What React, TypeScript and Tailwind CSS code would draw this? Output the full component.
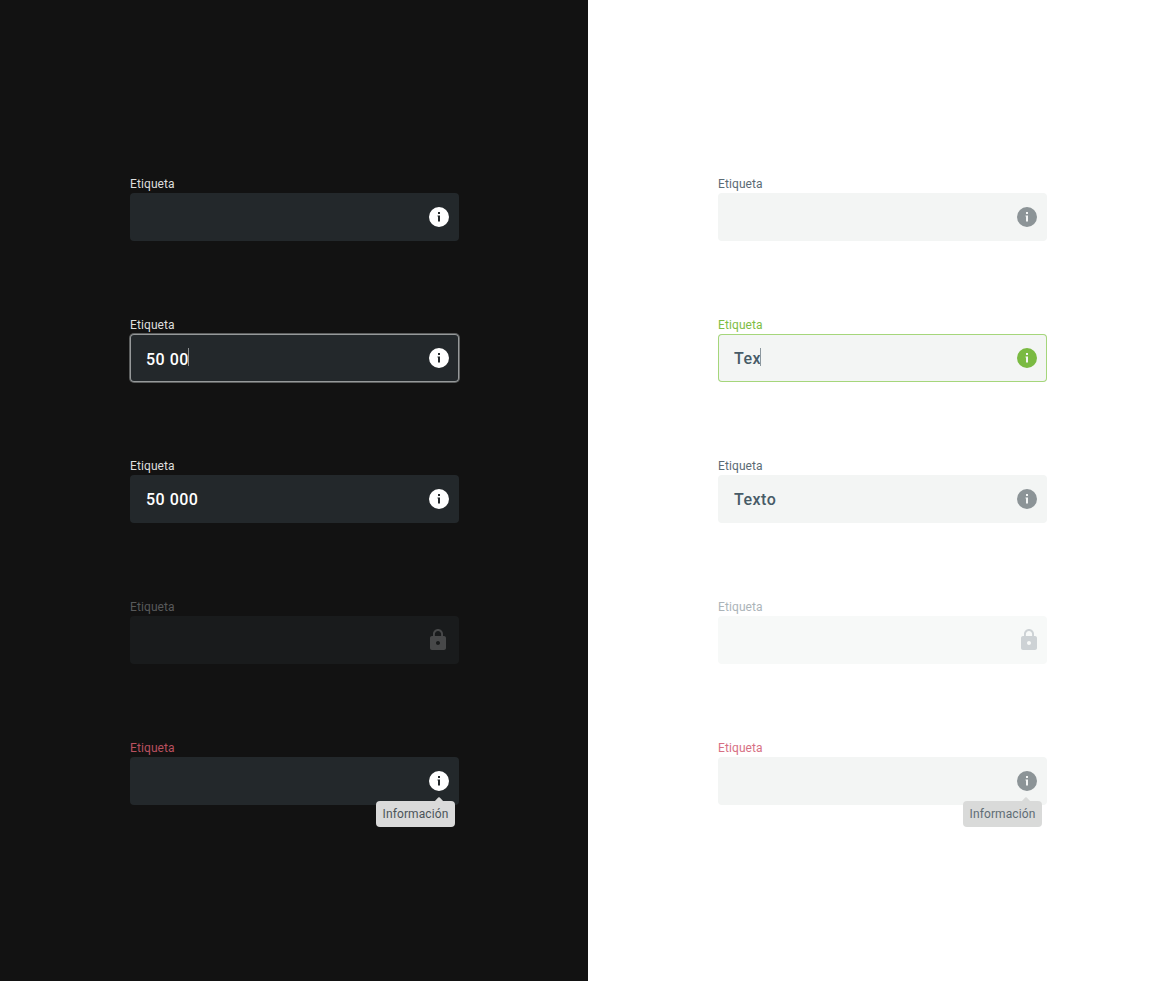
import React from "react";

type Field = {
  label: string;
  labelClass: string;
  boxClass: string;
  value?: string;
  valueClass?: string;
  caretClass?: string;
  icon: "info" | "lock";
  iconClass: string;
  tooltip?: string;
  tooltipClass?: string;
  arrowClass?: string;
};

function InfoIcon() {
  return (
    <svg viewBox="0 0 24 24" className="block size-6" fill="currentColor">
      <path
        fillRule="evenodd"
        d="M12 2a10 10 0 1 0 0 20 10 10 0 0 0 0-20Zm1 14.600h-2v-5.200h-.5v-.8H13v6Zm0-7.600h-2V7h2v2Z"
      />
    </svg>
  );
}

function LockIcon() {
  return (
    <svg viewBox="0 0 24 24" className="block size-6" fill="currentColor">
      <path d="M18 8h-1V6c0-2.760-2.240-5-5-5S7 3.240 7 6v2H6c-1.100 0-2 .9-2 2v10c0 1.100.9 2 2 2h12c1.100 0 2-.9 2-2V10c0-1.100-.9-2-2-2Zm-6 9c-1.100 0-2-.9-2-2s.9-2 2-2 2 .9 2 2-.9 2-2 2Zm3.100-9H8.900V6c0-1.710 1.390-3.100 3.100-3.100s3.100 1.390 3.100 3.100v2Z" />
    </svg>
  );
}

function TextField({ field }: { field: Field }) {
  return (
    <div className="w-[329px]">
      <div className={`h-[18px] text-xs leading-[18px] tracking-[0.1px] ${field.labelClass}`}>{field.label}</div>
      <div className={`relative flex h-12 items-center rounded pl-4 ${field.boxClass}`}>
        <div className={`flex items-center text-base font-medium ${field.valueClass ?? ""}`}>
          {field.value && <span>{field.value}</span>}
          {field.caretClass && <span className={`h-[18px] ${field.caretClass}`} />}
        </div>
        <div className={`ml-auto ${field.iconClass}`}>
          {field.icon === "info" ? <InfoIcon /> : <LockIcon />}
        </div>
        {field.tooltip && (
          <div
            className={`absolute top-11 flex h-[26px] w-[79px] items-center justify-center rounded text-xs tracking-[0.1px] ${field.tooltipClass}`}
          >
            <svg
              viewBox="0 0 10 5"
              className={`absolute -top-1 h-[5px] w-[10px] ${field.arrowClass}`}
              fill="currentColor"
            >
              <path d="M0 5 4.200.6q.8-.8 1.600 0L10 5Z" />
            </svg>
            <span>{field.tooltip}</span>
          </div>
        )}
      </div>
    </div>
  );
}

const darkBase: Field = {
  label: "Etiqueta",
  labelClass: "text-[#dedede]",
  boxClass: "bg-[#23282b]",
  icon: "info",
  iconClass: "mr-2 text-white",
};

const lightBase: Field = {
  label: "Etiqueta",
  labelClass: "text-[#5b6b75]",
  boxClass: "bg-[#f3f5f4]",
  icon: "info",
  iconClass: "mr-2 text-[#8c9497]",
};

const darkFields: Field[] = [
  darkBase,
  {
    ...darkBase,
    boxClass: "bg-[#23282b] ring-1 ring-[#5c5e5e] inset-ring inset-ring-[#96999a]",
    value: "50 00",
    valueClass: "pt-[3px] text-white tracking-[0.5px]",
    caretClass: "-ml-px -mt-[5px] w-[1.5px] bg-[#8d9192]",
  },
  { ...darkBase, value: "50 000", valueClass: "pt-[2px] text-white tracking-[0.5px]" },
  {
    ...darkBase,
    labelClass: "text-[#58595a]",
    boxClass: "bg-[#191b1c]",
    icon: "lock",
    iconClass: "mr-[9px] text-[#474849]",
  },
  {
    ...darkBase,
    labelClass: "text-[#b9505f]",
    tooltip: "Información",
    tooltipClass: "left-[246px] bg-[#dadada] text-[#4b5459]",
    arrowClass: "left-[58px] text-[#dadada]",
  },
];

const lightFields: Field[] = [
  lightBase,
  {
    ...lightBase,
    labelClass: "text-[#7ebd45]",
    boxClass: "bg-[#f3f5f4] inset-ring inset-ring-[#a5d67b]",
    value: "Tex",
    valueClass: "pt-[2px] text-[#475b67] tracking-[0.5px]",
    caretClass: "-ml-px -mt-[5px] w-px bg-[#8c989f]",
    iconClass: "mr-2 text-[#7aba42]",
  },
  { ...lightBase, value: "Texto", valueClass: "pt-[2px] text-[#475b67] tracking-[0.5px]" },
  {
    ...lightBase,
    labelClass: "text-[#acb4b9]",
    boxClass: "bg-[#f7f9f8]",
    icon: "lock",
    iconClass: "mr-1.5 text-[#cdd2d5]",
  },
  {
    ...lightBase,
    labelClass: "text-[#d77084]",
    tooltip: "Información",
    tooltipClass: "left-[245px] bg-[#d9dad9] text-[#5f6d75]",
    arrowClass: "left-[58px] text-[#d9dad9]",
  },
];

function Panel({ fields, className }: { fields: Field[]; className: string }) {
  return (
    <section className={`flex w-[588px] flex-col gap-[75px] pl-[130px] pt-[175px] ${className}`}>
      {fields.map((field, i) => (
        <TextField key={i} field={field} />
      ))}
    </section>
  );
}

export default function App() {
  return (
    <main className="flex h-[981px] w-[1176px] overflow-hidden font-['Roboto',sans-serif]">
      <Panel fields={darkFields} className="bg-[#121212]" />
      <Panel fields={lightFields} className="bg-white" />
    </main>
  );
}
